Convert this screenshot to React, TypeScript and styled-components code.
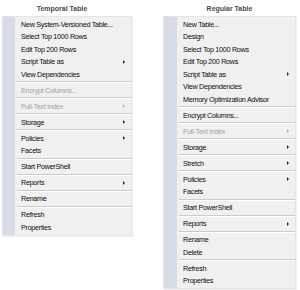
import React from "react";
import styled, { createGlobalStyle } from "styled-components";

const Global = createGlobalStyle`
  html, body { margin: 0; padding: 0; background: #ffffff; }
  body { width: 300px; height: 290px; overflow: hidden; font-family: "Liberation Sans", Arial, sans-serif; }
`;

const Page = styled.div`
  display: flex;
  align-items: flex-start;
  gap: 31px;
  padding-left: 2px;
`;

const Column = styled.div<{ $w: number }>`
  display: flex;
  flex-direction: column;
  width: ${(p) => p.$w}px;
`;

const Title = styled.div<{ $shift: number }>`
  height: 16px;
  display: flex;
  align-items: center;
  justify-content: center;
  padding-right: ${(p) => p.$shift}px;
  font-size: 7px;
  font-weight: 700;
  color: #4a4a4a;
`;

const Menu = styled.div<{ $gutter: number }>`
  display: flex;
  flex-direction: column;
  padding: 1px 0;
  border: 1px solid #e4e4e4;
  background: linear-gradient(
    to right,
    #d5dbe7 0,
    #d5dbe7 ${(p) => p.$gutter}px,
    #f0f0f0 ${(p) => p.$gutter}px
  );
  box-shadow: 1px 1px 1px rgba(0, 0, 0, 0.06);
`;

const Item = styled.div<{ $disabled?: boolean; $indent: number }>`
  height: 12.5px;
  display: flex;
  align-items: center;
  justify-content: space-between;
  padding-left: ${(p) => p.$indent}px;
  padding-right: 6px;
  font-size: 7.2px;
  letter-spacing: -0.28px;
  color: ${(p) => (p.$disabled ? "#a0a0a0" : "#0c0c0c")};
  white-space: nowrap;
`;

const Arrow = styled.span<{ $disabled?: boolean }>`
  width: 0;
  height: 0;
  border-top: 2px solid transparent;
  border-bottom: 2px solid transparent;
  border-left: 2.5px solid ${(p) => (p.$disabled ? "#b0b0b0" : "#222")};
`;

const Separator = styled.div<{ $indent: number }>`
  margin: 0.75px 0 0.75px ${(p) => p.$indent}px;
  height: 1px;
  background: #cbcbcb;
  border-bottom: 1px solid #ffffff;
`;

type Entry =
  | { kind: "sep" }
  | { kind: "item"; label: string; sub?: boolean; disabled?: boolean };

const I = (label: string, sub = false, disabled = false): Entry => ({
  kind: "item",
  label,
  sub,
  disabled,
});
const S: Entry = { kind: "sep" };

const temporal: Entry[] = [
  I("New System-Versioned Table..."),
  I("Select Top 1000 Rows"),
  I("Edit Top 200 Rows"),
  I("Script Table as", true),
  I("View Dependencies"),
  S,
  I("Encrypt Columns...", false, true),
  S,
  I("Full-Text index", true, true),
  S,
  I("Storage", true),
  S,
  I("Policies", true),
  I("Facets"),
  S,
  I("Start PowerShell"),
  S,
  I("Reports", true),
  S,
  I("Rename"),
  S,
  I("Refresh"),
  I("Properties"),
];

const regular: Entry[] = [
  I("New Table..."),
  I("Design"),
  I("Select Top 1000 Rows"),
  I("Edit Top 200 Rows"),
  I("Script Table as", true),
  I("View Dependencies"),
  I("Memory Optimization Advisor"),
  S,
  I("Encrypt Columns..."),
  S,
  I("Full-Text index", true, true),
  S,
  I("Storage", true),
  S,
  I("Stretch", true),
  S,
  I("Policies", true),
  I("Facets"),
  S,
  I("Start PowerShell"),
  S,
  I("Reports", true),
  S,
  I("Rename"),
  I("Delete"),
  S,
  I("Refresh"),
  I("Properties"),
];

function ContextMenu({
  entries,
  gutter,
  indent,
}: {
  entries: Entry[];
  gutter: number;
  indent: number;
}) {
  return (
    <Menu $gutter={gutter}>
      {entries.map((e, i) =>
        e.kind === "sep" ? (
          <Separator key={i} $indent={gutter + 2} />
        ) : (
          <Item key={i} $indent={indent} $disabled={e.disabled}>
            <span>{e.label}</span>
            {e.sub && <Arrow $disabled={e.disabled} />}
          </Item>
        )
      )}
    </Menu>
  );
}

export default function App() {
  return (
    <>
      <Global />
      <Page>
        <Column $w={130}>
          <Title $shift={10}>Temporal Table</Title>
          <ContextMenu entries={temporal} gutter={12} indent={18} />
        </Column>
        <Column $w={133}>
          <Title $shift={0}>Regular Table</Title>
          <ContextMenu entries={regular} gutter={13} indent={19} />
        </Column>
      </Page>
    </>
  );
}
